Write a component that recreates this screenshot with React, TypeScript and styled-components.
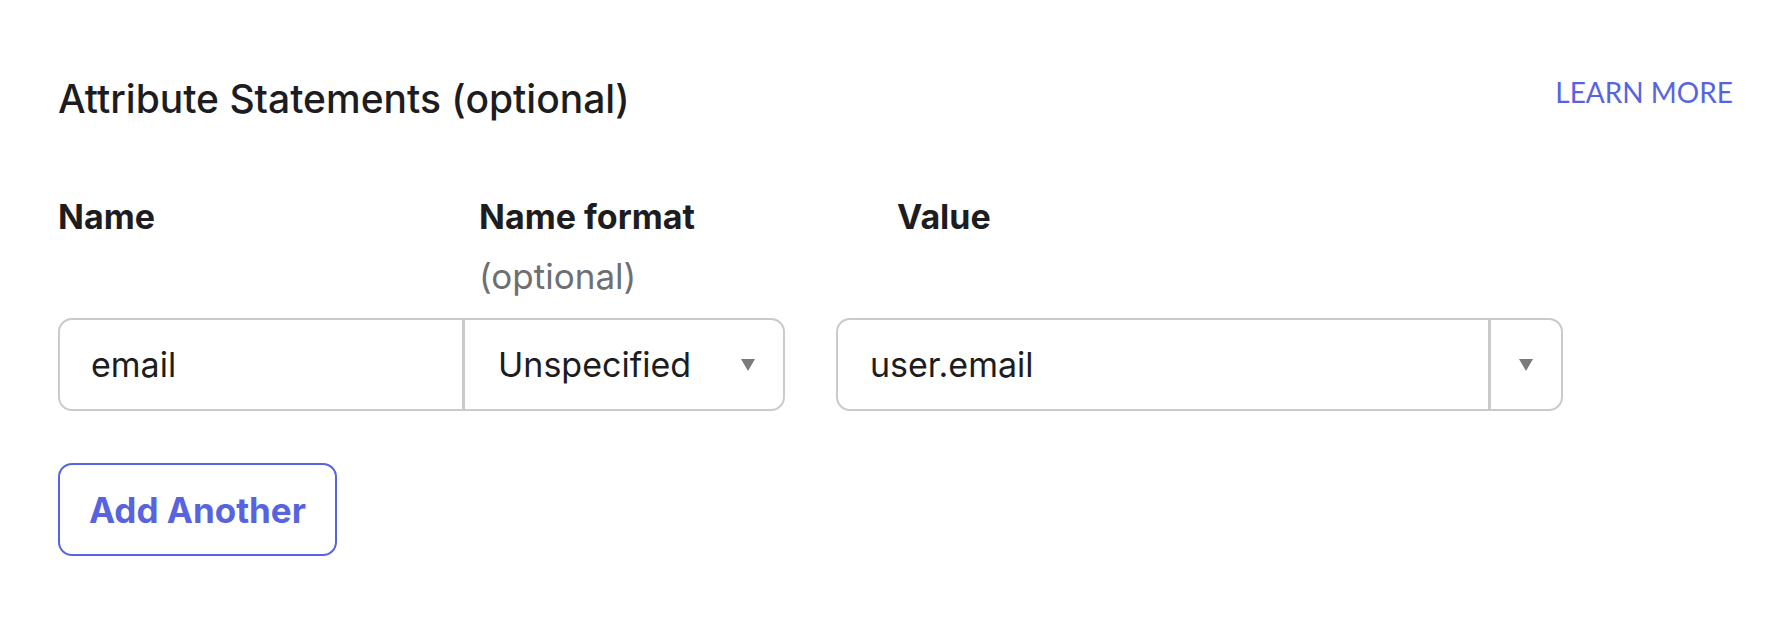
import styled, { createGlobalStyle } from "styled-components";

const GlobalStyle = createGlobalStyle`
  body {
    margin: 0;
    background: #ffffff;
    font-family: Inter, "Noto Sans", Arial, sans-serif;
    color: #1d1d21;
  }
`;

const Page = styled.div`
  padding: 75px 43px 0 58px;
`;

const Header = styled.div`
  display: flex;
  justify-content: space-between;
  align-items: flex-start;
`;

const Title = styled.h2`
  margin: 0;
  font-size: 39px;
  line-height: 48px;
  font-weight: 500;
  color: #1d1d21;
`;

const LearnMore = styled.a`
  font-family: Lato, "Open Sans", sans-serif;
  font-size: 28px;
  line-height: 34px;
  font-weight: 400;
  color: #5864df;
  text-decoration: none;
  cursor: pointer;
`;

const LabelGrid = styled.div`
  display: grid;
  grid-template-columns: 421px 418px auto;
  margin-top: 74px;
`;

const LabelCell = styled.div`
  display: flex;
  flex-direction: column;
`;

const Label = styled.label`
  font-size: 34px;
  line-height: 40px;
  font-weight: 700;
  color: #1d1d21;
`;

const Hint = styled.span`
  margin-top: 19px;
  font-size: 35px;
  line-height: 40px;
  color: #6e6e73;
`;

const Row = styled.div`
  display: flex;
  align-items: stretch;
  gap: 51px;
  margin-top: 22px;
`;

const Group = styled.div`
  display: flex;
`;

const TextInput = styled.div`
  box-sizing: border-box;
  width: 406px;
  height: 93px;
  display: flex;
  align-items: center;
  padding-left: 31px;
  border: 2px solid #cacaca;
  border-radius: 14px 0 0 14px;
  font-size: 34px;
  color: #1d1d21;
`;

const Select = styled.div<{ $w: number }>`
  box-sizing: border-box;
  width: ${(p) => p.$w}px;
  height: 93px;
  display: flex;
  align-items: center;
  justify-content: space-between;
  padding: 0 28px 0 33px;
  border: 2px solid #cacaca;
  border-left-width: 1px;
  border-radius: 0 14px 14px 0;
  font-size: 34px;
  color: #1d1d21;
`;

const Combo = styled.div`
  box-sizing: border-box;
  width: 727px;
  height: 93px;
  display: flex;
  border: 2px solid #cacaca;
  border-radius: 14px;
`;

const ComboValue = styled.div`
  flex: 1;
  display: flex;
  align-items: center;
  padding-left: 32px;
  font-size: 34px;
  color: #1d1d21;
  border-right: 3px solid #cacaca;
`;

const ComboToggle = styled.div`
  width: 70px;
  display: flex;
  align-items: center;
  justify-content: center;
`;

const AddButton = styled.button`
  box-sizing: border-box;
  margin-top: 52px;
  width: 279px;
  height: 93px;
  border: 2px solid #5864df;
  border-radius: 14px;
  background: #ffffff;
  font-family: Inter, "Noto Sans", Arial, sans-serif;
  font-size: 35px;
  font-weight: 700;
  color: #5864df;
  cursor: pointer;
`;

const Caret = () => (
  <svg width="14" height="12" viewBox="0 0 14 12">
    <polygon points="0,0 14,0 7,12" fill="#7b7b7b" />
  </svg>
);

const App = () => {
  return (
    <>
      <GlobalStyle />
      <Page>
        <Header>
          <Title>Attribute Statements (optional)</Title>
          <LearnMore>LEARN MORE</LearnMore>
        </Header>

        <LabelGrid>
          <LabelCell>
            <Label>Name</Label>
          </LabelCell>
          <LabelCell>
            <Label>Name format</Label>
            <Hint>(optional)</Hint>
          </LabelCell>
          <LabelCell>
            <Label>Value</Label>
          </LabelCell>
        </LabelGrid>

        <Row>
          <Group>
            <TextInput>email</TextInput>
            <Select $w={321}>
              Unspecified
              <Caret />
            </Select>
          </Group>
          <Combo>
            <ComboValue>user.email</ComboValue>
            <ComboToggle>
              <Caret />
            </ComboToggle>
          </Combo>
        </Row>

        <AddButton type="button">Add Another</AddButton>
      </Page>
    </>
  );
};

export default App;
